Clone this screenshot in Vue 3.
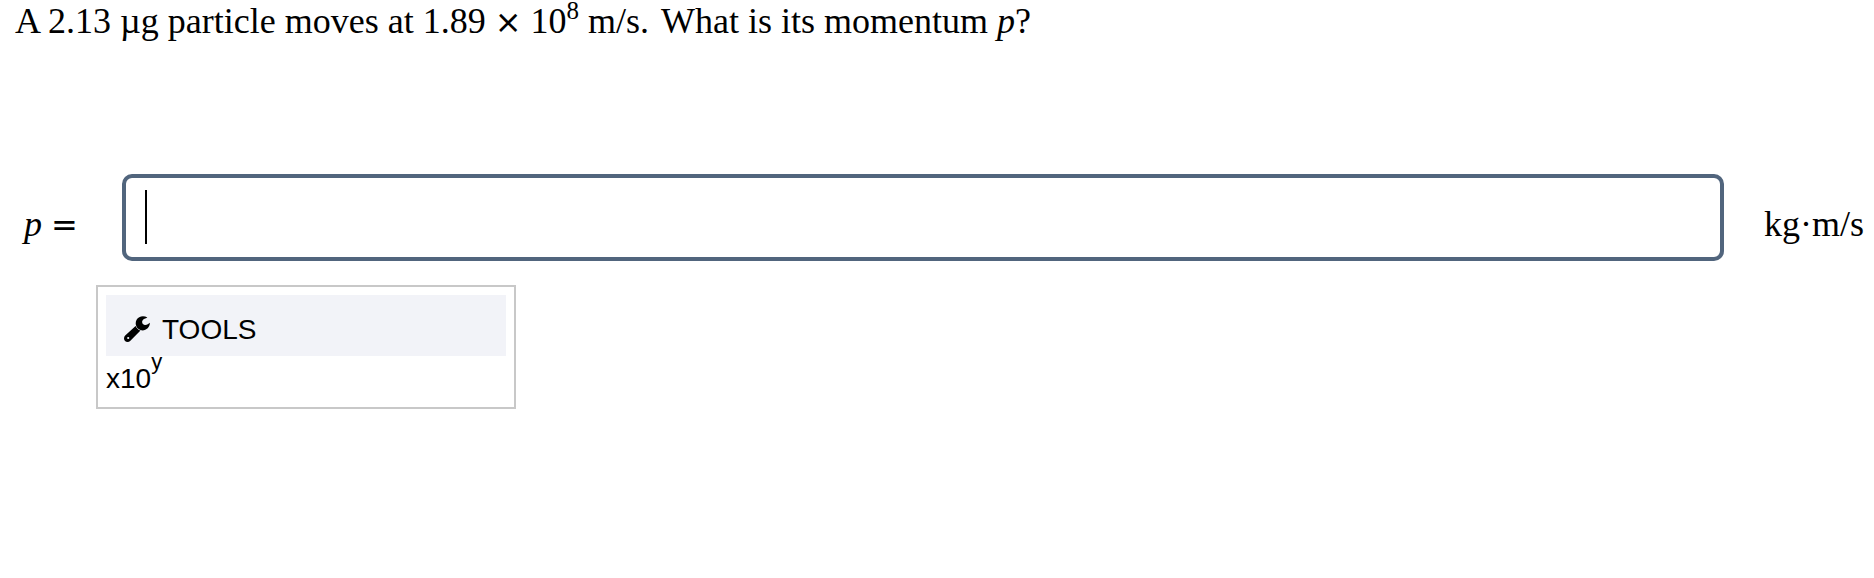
<template>
  <main class="question">
    <p class="prompt">
      A 2.13 µg particle moves at 1.89 <span class="operator">×</span> 10<sup>8</sup> m/s.<span class="gap"></span>What is its momentum <i>p</i>?
    </p>

    <div class="answer-row">
      <label class="label" for="answer"><i>p</i> <span class="operator">=</span></label>
      <div class="field">
        <input id="answer" v-model="answer" type="text" autocomplete="off" />
        <span v-if="!answer" class="caret"></span>
      </div>
      <span class="unit">kg·m/s</span>
    </div>

    <section class="tools">
      <div class="tools-header">
        <svg class="wrench" viewBox="0 0 26 26" aria-hidden="true">
          <path
            fill-rule="evenodd"
            d="M11.6 9.9 L1.2 19.6 C-.3 21.1-.4 23.6 1 25 C2.4 26.4 4.9 26.3 6.4 24.8 L16.5 14.6 C14.4 13.8 12.4 12.1 11.6 9.9 Z M4.2 20.9 A1.1 1.1 0 1 1 4.2 23.1 A1.1 1.1 0 1 1 4.2 20.9 Z"
          />
          <path
            d="M23.4 1.6 C19.6-.8 14.6.2 12.6 3.8 C10.3 8 12.6 13.3 17.2 14.3 C21.6 15.2 25.9 11.6 25.9 6.8 C24.3 7.8 22.9 9.2 20.7 8.9 C18.7 8.6 17.6 6.6 18.4 4.8 C19.2 2.9 21.6 2.6 23.4 1.6 Z"
          />
        </svg>
        <span>TOOLS</span>
      </div>
      <button type="button" class="power" @click="insertPower">x10<sup>y</sup></button>
    </section>
  </main>
</template>

<script setup>
import { ref } from "vue"

const answer = ref("")

// append scientific notation to the answer
function insertPower() {
  answer.value += "x10^"
}
</script>

<style>
body {
  margin: 0;
  background: #fff;
}
</style>

<style scoped>
.question {
  color: #000;
  font-family: "Liberation Serif", "Times New Roman", serif;
  font-size: 36px;
  line-height: 42px;
}
.prompt {
  margin: 0;
  padding-left: 15px;
}
.prompt sup {
  font-size: 25px;
  line-height: 0;
  vertical-align: 14px;
}
.gap {
  display: inline-block;
  width: 12px;
}
.operator {
  font-family: "DejaVu Sans", sans-serif;
  font-size: 32px;
  line-height: 0;
}
.answer-row {
  display: flex;
  align-items: center;
  margin-top: 132px;
  padding: 0 10px 0 24px;
}
.label {
  flex: none;
  width: 98px;
  padding-top: 12px;
}
.field {
  position: relative;
  flex: 1;
}
.field input {
  display: block;
  box-sizing: border-box;
  width: 100%;
  height: 87px;
  padding: 0 19px;
  border: 4px solid #51657d;
  border-radius: 10px;
  outline: none;
  background: #fff;
  color: #000;
  font: inherit;
}
.caret {
  position: absolute;
  top: 16px;
  left: 23px;
  width: 2px;
  height: 54px;
  background: #000;
  pointer-events: none;
}
.field:focus-within .caret {
  display: none;
}
.unit {
  flex: none;
  margin-left: 40px;
  padding-top: 12px;
}
.tools {
  box-sizing: border-box;
  width: 420px;
  margin: 24px 0 0 96px;
  padding: 8px 8px 12px;
  border: 2px solid #c8c8c8;
  font-family: "Liberation Sans", Arial, sans-serif;
  font-size: 28px;
  line-height: 32px;
}
.tools-header {
  display: flex;
  align-items: center;
  gap: 12px;
  padding: 19px 18px 10px;
  background: #f2f3f8;
}
.wrench {
  width: 26px;
  height: 26px;
  margin-bottom: 2px;
}
.power {
  display: block;
  padding: 6px 0 0;
  border: none;
  background: none;
  color: #000;
  font: inherit;
  cursor: pointer;
}
.power sup {
  font-size: 22px;
  line-height: 0;
  vertical-align: 19px;
}
</style>
